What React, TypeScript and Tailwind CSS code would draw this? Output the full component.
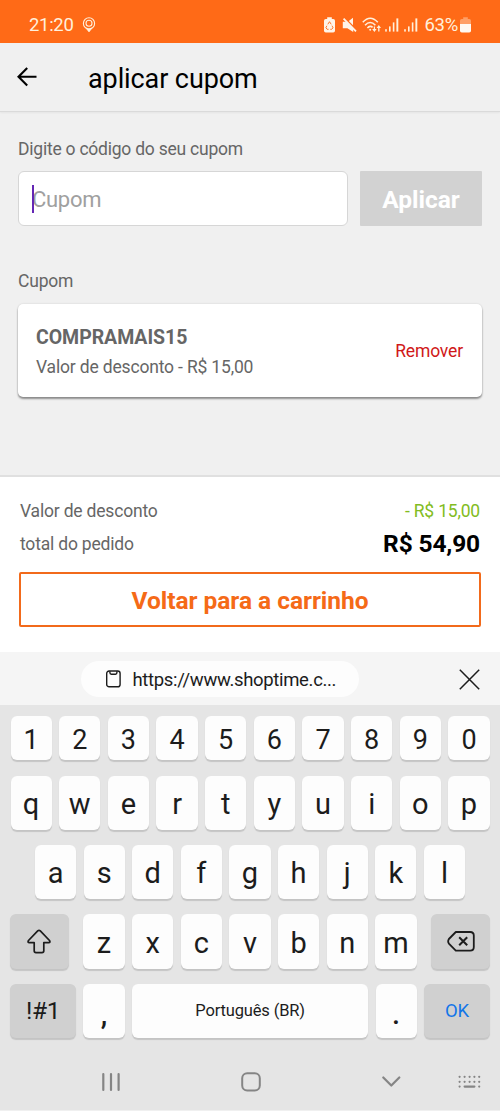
import type { ReactNode } from 'react';
import clsx from 'clsx';

const NUMBER_ROW = ['1', '2', '3', '4', '5', '6', '7', '8', '9', '0'];
const TOP_ROW = ['q', 'w', 'e', 'r', 't', 'y', 'u', 'i', 'o', 'p'];
const HOME_ROW = ['a', 's', 'd', 'f', 'g', 'h', 'j', 'k', 'l'];
const BOTTOM_ROW = ['z', 'x', 'c', 'v', 'b', 'n', 'm'];

function SignalIcon() {
  return (
    <svg width="14" height="14" viewBox="0 0 14 14" fill="#fff0dc">
      <rect x="0.2" y="11.2" width="1.6" height="2.4" />
      <rect x="4" y="8.4" width="1.6" height="5.2" />
      <rect x="7.8" y="4.4" width="1.6" height="9.2" />
      <rect x="11.4" y="0.4" width="1.9" height="13.2" />
    </svg>
  );
}

function StatusBar() {
  return (
    <div className="flex h-[43px] items-center bg-[#ff6a17] pt-[7px] pl-[29px] text-[18.5px] leading-none text-[#fff0dc]">
      <span className="w-[53px] tracking-[-0.3px]">21:20</span>
      <svg width="14" height="16" viewBox="0 0 14 16" fill="none" stroke="#fff0dc">
        <circle cx="7" cy="6.4" r="5.6" strokeWidth="1.1" />
        <circle cx="7" cy="6.2" r="3" strokeWidth="1.1" />
        <path d="M3.8 11 7 15l3.2-4-3.2.9z" fill="#fff0dc" strokeWidth="0.6" />
      </svg>
      <div className="ml-[228px] flex items-center">
        {/* Battery saver */}
        <svg width="11" height="16" viewBox="0 0 11 16">
          <path d="M3.2.3h4.6v1.6h1.4Q11 1.9 11 3.7v10Q11 15.5 9.2 15.5H1.8Q0 15.5 0 13.7v-10Q0 1.9 1.8 1.9h1.4z" fill="#fff4e8" />
          <path d="m3.8 7.3 1.7-2.6 1.7 2.6M8 8.7l1 2.1-1.3 1.5H6.3M4.6 12.3H3.1l-1.2-1.6 1-1.9" fill="none" stroke="#ff6a17" strokeWidth="0.9" />
        </svg>
        {/* Muted speaker */}
        <svg className="ml-[6.5px]" width="16" height="16" viewBox="0 0 16 16" fill="#fff4e8">
          <path d="M.8 4.8h4l6.4 6.6v3.7L5.4 11.2H.8zM11 .8v7.4L6.8 4z" />
          <path d="m1.6 1.6 12.4 12.8" stroke="#fff4e8" strokeWidth="1.8" />
        </svg>
        {/* Wi-Fi with traffic arrows */}
        <svg className="ml-[4px]" width="20" height="16" viewBox="0 0 20 16" fill="none" stroke="#fff0dc" strokeWidth="1.6">
          <path d="M.8 5.2Q8.2 -2.8 15.8 5.2M3 8.2Q8.2 2.8 13.4 8.2M5.4 11Q8.2 8 10.6 10.4" />
          <circle cx="8.2" cy="12.8" r="1" fill="#fff0dc" stroke="none" />
          <path d="M12.4 9.4v4M16.8 14.4v-4" strokeWidth="1.3" />
          <path d="m10.2 12 2.2 3 2.2-3zM14.6 11l2.2-3 2.2 3z" fill="#fff0dc" stroke="none" />
        </svg>
        <div className="ml-[3.5px] flex gap-[5px]">
          <SignalIcon />
          <SignalIcon />
        </div>
        <span className="ml-[6.5px] w-[35.5px] tracking-[-0.3px]">63%</span>
        <svg width="11" height="16" viewBox="0 0 11 16">
          <path d="M3.2.3h4.6v1.6h1.4Q11 1.9 11 3.7V7H0V3.7Q0 1.9 1.8 1.9h1.4z" fill="#ff9f66" />
          <path d="M0 7h11v6.7q0 1.8-1.8 1.8H1.8Q0 15.5 0 13.7z" fill="#fff9f2" />
        </svg>
      </div>
    </div>
  );
}

function Header() {
  return (
    <header className="flex h-[69px] items-center border-b border-[#dadada] pl-[17px] shadow-[0_1px_2px_rgba(0,0,0,0.05)]">
      <svg className="w-[20px]" height="20" viewBox="0 0 20 20" fill="none" stroke="#000" strokeWidth="2.1">
        <path d="M19.5 9.8H1.6M10.2 1 1.5 9.8l8.7 8.7" />
      </svg>
      <h1 className="ml-[51px] pt-[5px] text-[27px] tracking-[-0.1px] text-black">aplicar cupom</h1>
    </header>
  );
}

function CouponForm() {
  return (
    <section className="px-[18px] pt-[25px]">
      <p className="h-6 text-[17.5px] leading-6 tracking-[-0.23px] text-[#666]">Digite o código do seu cupom</p>
      <div className="mt-[10px] flex gap-3">
        <div className="relative flex h-[55px] w-[330px] items-center rounded-[6px] border border-[#d6d6d6] bg-white pl-[13px]">
          <div className="absolute top-[13px] left-[12.5px] h-[28px] w-[2.5px] bg-[#6427b4]" />
          <span className="pt-px text-[22px] tracking-[-0.3px] text-[#a0a0a0]">Cupom</span>
        </div>
        <button className="h-[55px] flex-1 rounded-[1px] bg-[#d2d2d2] pt-[4px] text-[24.5px] font-bold text-white">
          Aplicar
        </button>
      </div>
    </section>
  );
}

function AppliedCoupon() {
  return (
    <section className="px-[18px] pt-[43px]">
      <p className="h-6 text-[17.5px] leading-6 tracking-[-0.2px] text-[#666]">Cupom</p>
      <div className="mt-[11px] flex h-[93px] items-center justify-between rounded-[5px] bg-white pr-[19px] pl-[18px] shadow-[0_2px_2px_rgba(0,0,0,0.4),0_0_2px_rgba(0,0,0,0.15)]">
        <div>
          <p className="h-[30px] text-[19.5px] leading-[33px] font-bold tracking-[-0.05px] text-[#666]">COMPRAMAIS15</p>
          <p className="h-[30px] text-[17.5px] leading-[33px] tracking-[-0.17px] text-[#666]">Valor de desconto - R$ 15,00</p>
        </div>
        <button className="pt-[2px] text-[17.5px] tracking-[-0.15px] text-[#d01818]">Remover</button>
      </div>
    </section>
  );
}

function OrderSummary() {
  return (
    <section className="mt-[78px] h-[177px] border-t-2 border-[#e0e0e0] bg-white px-[19px]">
      <div className="mt-[17px] flex h-[34px] items-center justify-between px-px text-[17.5px] tracking-[-0.19px]">
        <span className="text-[#666]">Valor de desconto</span>
        <span className="text-[#82bc22]">- R$ 15,00</span>
      </div>
      <div className="flex h-[33px] items-center justify-between px-px">
        <span className="text-[17.5px] tracking-[-0.19px] text-[#666]">total do pedido</span>
        <span className="text-[24.5px] font-bold tracking-[-0.15px] text-black">R$ 54,90</span>
      </div>
      <button className="mt-[11px] h-[55px] w-full rounded-[2px] border-2 border-[#f26a1b] pt-[4px] text-[24.5px] font-bold tracking-[-0.03px] text-[#f56a17]">
        Voltar para a carrinho
      </button>
    </section>
  );
}

interface KeyProps {
  children: ReactNode;
  dark?: boolean;
  className?: string;
}

function Key({ children, dark = false, className }: KeyProps) {
  return (
    <div
      className={clsx(
        'flex items-center justify-center rounded-[6px] shadow-[0_1.5px_1px_rgba(0,0,0,0.14)]',
        dark ? 'bg-[#d0d0d0]' : 'bg-[#fdfdfd]',
        className ?? 'flex-1 pt-[4px]'
      )}
    >
      {children}
    </div>
  );
}

function Keyboard() {
  return (
    <div className="h-[458px] bg-[#e5e5e5] text-[#1c1c1c]">
      {/* Clipboard suggestion */}
      <div className="flex h-[53px] items-center bg-[#f5f5f5] pl-[81px]">
        <div className="mt-px flex h-[36px] w-[278px] items-center rounded-full bg-[#fdfdfd] pl-[25px]">
          <svg width="15" height="18" viewBox="0 0 15 18" fill="none" stroke="#1c1c1c" strokeWidth="1.4">
            <rect x="0.7" y="1" width="13.4" height="15.8" rx="2.4" />
            <path d="M3.9 1.2v1.6q0 1.4 1.4 1.4h4.2q1.4 0 1.4-1.4V1.2" />
          </svg>
          <span className="ml-[11.5px] pt-[4px] text-[18.5px] tracking-[-0.33px]">https://www.shoptime.c...</span>
        </div>
        <svg className="mt-px ml-[100px]" width="21" height="21" viewBox="0 0 21 21" fill="none" stroke="#1c1c1c" strokeWidth="1.5">
          <path d="m.8.8 19.4 19.4M20.2.8.8 20.2" />
        </svg>
      </div>

      <div className="flex h-[55px] gap-[7.5px] px-[10.5px] pt-[11px] text-[27px]">
        {NUMBER_ROW.map((k) => (
          <Key key={k}>{k}</Key>
        ))}
      </div>
      <div className="mt-[16px] flex h-[54px] gap-[7.5px] px-[10.5px] text-[29px]">
        {TOP_ROW.map((k) => (
          <Key key={k}>{k}</Key>
        ))}
      </div>
      <div className="mt-[15px] flex h-[54px] gap-[7.5px] px-[35px] text-[29px]">
        {HOME_ROW.map((k) => (
          <Key key={k}>{k}</Key>
        ))}
      </div>
      <div className="mt-[15px] flex h-[54.5px] justify-between px-[10.3px] text-[29px]">
        <Key dark className="w-[58.3px]">
          <svg width="24" height="25" viewBox="0 0 24 25" fill="none" stroke="#1c1c1c" strokeWidth="1.7" strokeLinejoin="round">
            <path d="M10.7 1.9q1.3-1.2 2.6 0l9.2 9.6q1.2 2.2-.9 2.2h-4.8v8.1q0 1.8-1.8 1.8H9q-1.8 0-1.8-1.8v-8.1H2.4q-2.1 0-.9-2.2z" />
          </svg>
        </Key>
        <div className="flex w-[333.3px] gap-[7.5px]">
          {BOTTOM_ROW.map((k) => (
            <Key key={k}>{k}</Key>
          ))}
        </div>
        <Key dark className="w-[58.3px]">
          <svg width="28" height="21" viewBox="0 0 28 21" fill="none" stroke="#1c1c1c" strokeWidth="1.8" strokeLinejoin="round">
            <path d="M8.8 1h14.4q3.6 0 3.6 3.6v11.4q0 3.6-3.6 3.6H8.8L1.9 12.6q-1.5-2.3 0-4.6z" />
            <path d="m12.2 6.3 8 8M20.2 6.3l-8 8" strokeWidth="2" />
          </svg>
        </Key>
      </div>
      <div className="mt-[15px] flex h-[54px] gap-[7.5px] px-[10.3px]">
        <Key dark className="w-[65.7px] pt-[2px] text-[24.5px] tracking-[-0.3px]">!#1</Key>
        <Key className="w-[41.2px] pt-[9px] text-[29px] font-medium">,</Key>
        <Key className="flex-1 pt-[2px] text-[16.5px] tracking-[-0.15px]">Português (BR)</Key>
        <Key className="w-[41px] pt-[9px] text-[29px] font-medium">.</Key>
        <Key dark className="w-[65.7px] pt-[3px] text-[18.5px] tracking-[-0.3px] text-[#1476e8]">OK</Key>
      </div>

      {/* System navigation */}
      <div className="mt-[33.5px] flex h-[21px] items-center pl-[101px]">
        <svg width="20" height="20" viewBox="0 0 20 20" stroke="#858585" strokeWidth="2.2" strokeLinecap="round">
          <path d="M2.3 2v16M10 2v16M17.6 2v16" />
        </svg>
        <svg className="ml-[120px]" width="20" height="20" viewBox="0 0 20 20" fill="none" stroke="#858585" strokeWidth="2">
          <rect x="1.2" y="1.2" width="17.6" height="17.4" rx="5" />
        </svg>
        <svg className="ml-[121px]" width="19" height="12" viewBox="0 0 19 12" fill="none" stroke="#858585" strokeWidth="2.2" strokeLinecap="round" strokeLinejoin="round">
          <path d="m1.3 1.5 8 8 8-8" />
        </svg>
        <svg className="ml-[57px]" width="24" height="14" viewBox="0 0 24 14" fill="none" stroke="#858585" strokeWidth="2.2" strokeLinecap="round">
          <path d="M1.6 1.8h.01M6.6 1.8h.01M11.6 1.8h.01M16.4 1.8h.01M21.2 1.8h.01M1.6 6.8h.01M6.6 6.8h.01M11.6 6.8h.01M16.4 6.8h.01M21.2 6.8h.01M1.6 11.6h.01M6.6 11.6h9.8M21.2 11.6h.01" />
        </svg>
      </div>
    </div>
  );
}

export default function App() {
  return (
    <div className="h-[1111px] w-[500px] overflow-hidden bg-[#f0f0f0] font-[Roboto,sans-serif]">
      <StatusBar />
      <Header />
      <CouponForm />
      <AppliedCoupon />
      <OrderSummary />
      <Keyboard />
    </div>
  );
}
